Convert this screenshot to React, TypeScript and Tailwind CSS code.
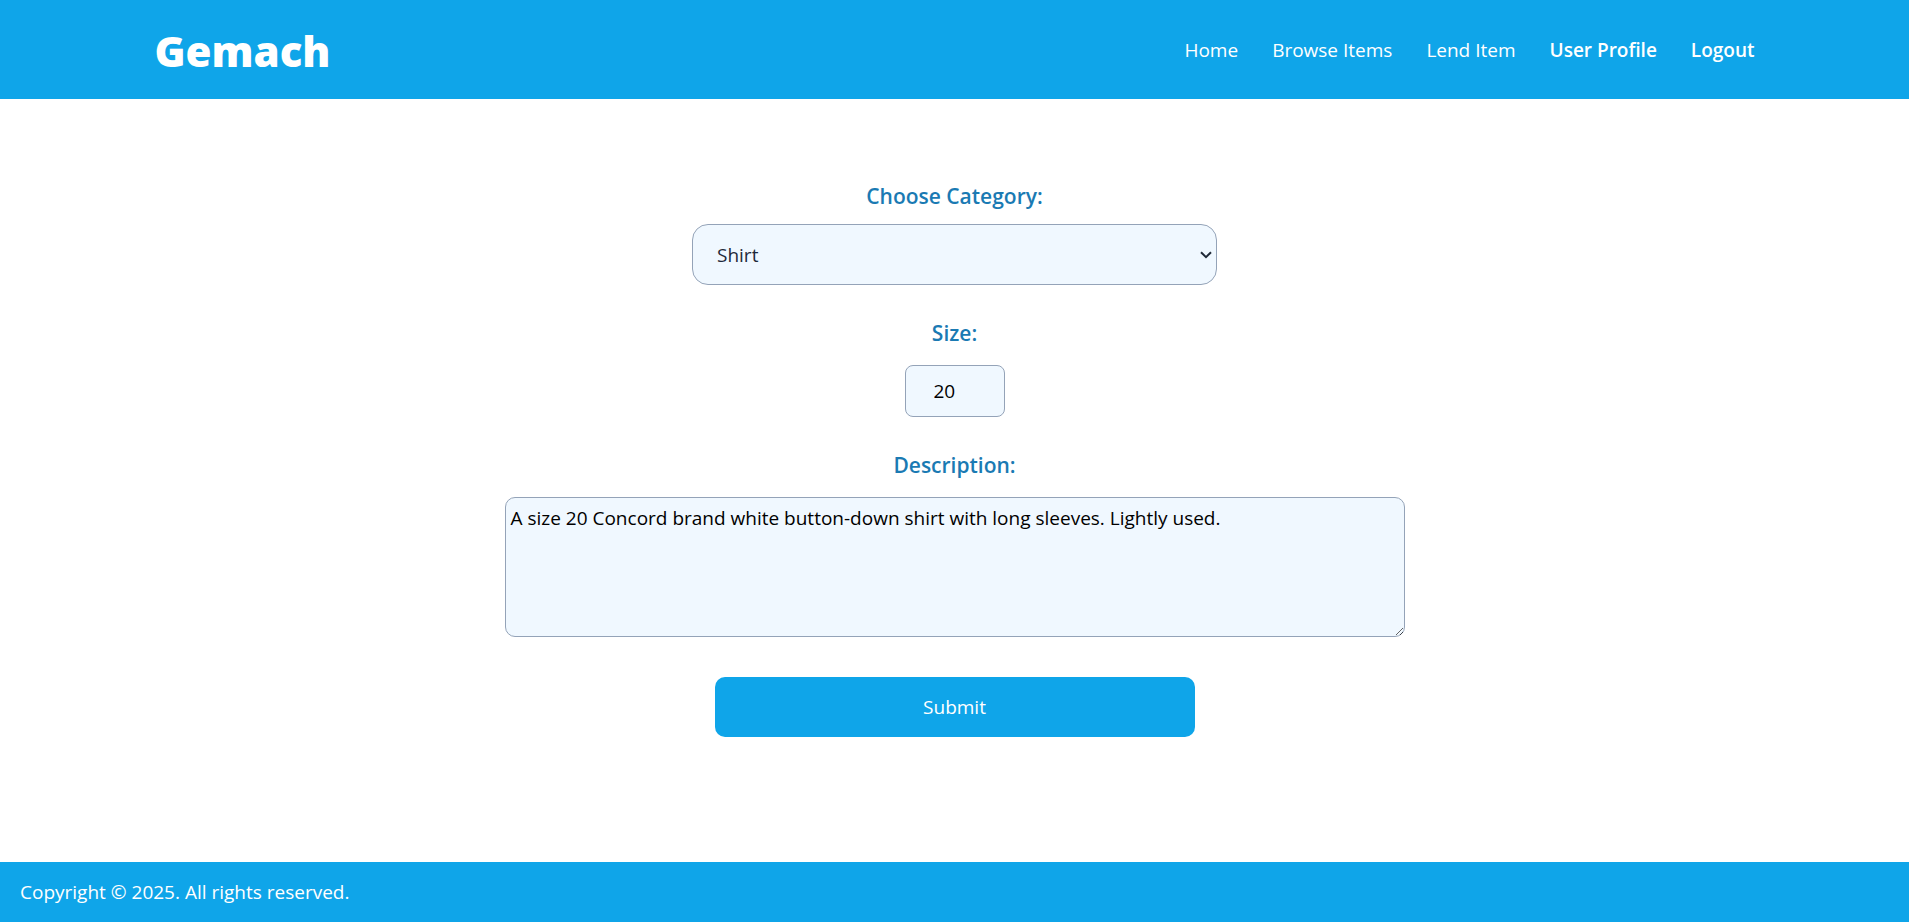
import { useState } from "react";

const links = [
  { label: "Home", strong: false },
  { label: "Browse Items", strong: false },
  { label: "Lend Item", strong: false },
  { label: "User Profile", strong: true },
  { label: "Logout", strong: true },
];

const categories = ["Shirt", "Pants", "Dress", "Jacket", "Shoes"];

const labelClass = "text-[21px] leading-8 font-semibold text-[#1a7ab3]";
const fieldClass = "border border-[#94a3b8] bg-[#f0f8ff]";

export default function App() {
  const [category, setCategory] = useState("Shirt");
  const [size, setSize] = useState("20");
  const [description, setDescription] = useState(
    "A size 20 Concord brand white button-down shirt with long sleeves. Lightly used."
  );

  return (
    <div className="flex min-h-screen flex-col bg-white font-['Open_Sans','Noto_Sans',sans-serif] text-[19px] leading-7">
      <header className="bg-[#0fa5e9] px-6 py-5 text-white">
        <div className="mx-auto flex max-w-[1600px] items-center justify-between">
          <a href="#" className="pt-[3px] text-[42px] leading-14 font-extrabold">
            Gemach
          </a>
          <nav className="flex items-center gap-[34px]">
            {links.map((link) => (
              <a key={link.label} href="#" className={link.strong ? "font-semibold" : ""}>
                {link.label}
              </a>
            ))}
          </nav>
        </div>
      </header>

      <main className="flex-1 px-6 pt-[81px] pb-12">
        <form className="flex flex-col items-center" onSubmit={(e) => e.preventDefault()}>
          <label htmlFor="category" className={labelClass}>
            Choose Category:
          </label>
          <div className="relative mt-3 w-full max-w-[525px]">
            <select
              id="category"
              value={category}
              onChange={(e) => setCategory(e.target.value)}
              className={`block h-[61px] w-full appearance-none rounded-2xl px-6 text-gray-800 ${fieldClass}`}
            >
              {categories.map((c) => (
                <option key={c}>{c}</option>
              ))}
            </select>
            <svg
              viewBox="0 0 12 8"
              className="pointer-events-none absolute top-[27px] right-[5px] h-2 w-3"
              fill="none"
              stroke="#1f2937"
              strokeWidth="2"
              aria-hidden="true"
            >
              <path d="M1 1.2 6 6.2 11 1.2" />
            </svg>
          </div>

          <label htmlFor="size" className={`mt-8 ${labelClass}`}>
            Size:
          </label>
          <input
            id="size"
            type="text"
            value={size}
            onChange={(e) => setSize(e.target.value)}
            className={`mt-4 h-[52px] w-[100px] rounded-lg px-7 text-black ${fieldClass}`}
          />

          <label htmlFor="description" className={`mt-8 ${labelClass}`}>
            Description:
          </label>
          <textarea
            id="description"
            value={description}
            onChange={(e) => setDescription(e.target.value)}
            className={`mt-4 h-[140px] w-full max-w-[900px] resize rounded-[10px] px-[5px] py-1.5 text-black ${fieldClass}`}
          />

          <button
            type="submit"
            className="mt-10 h-[60px] w-full max-w-[480px] rounded-[10px] bg-[#0fa5e9] text-white"
          >
            Submit
          </button>
        </form>
      </main>

      <footer className="bg-[#0fa5e9] px-5 py-4 text-white">
        <p>Copyright © 2025. All rights reserved.</p>
      </footer>
    </div>
  );
}
